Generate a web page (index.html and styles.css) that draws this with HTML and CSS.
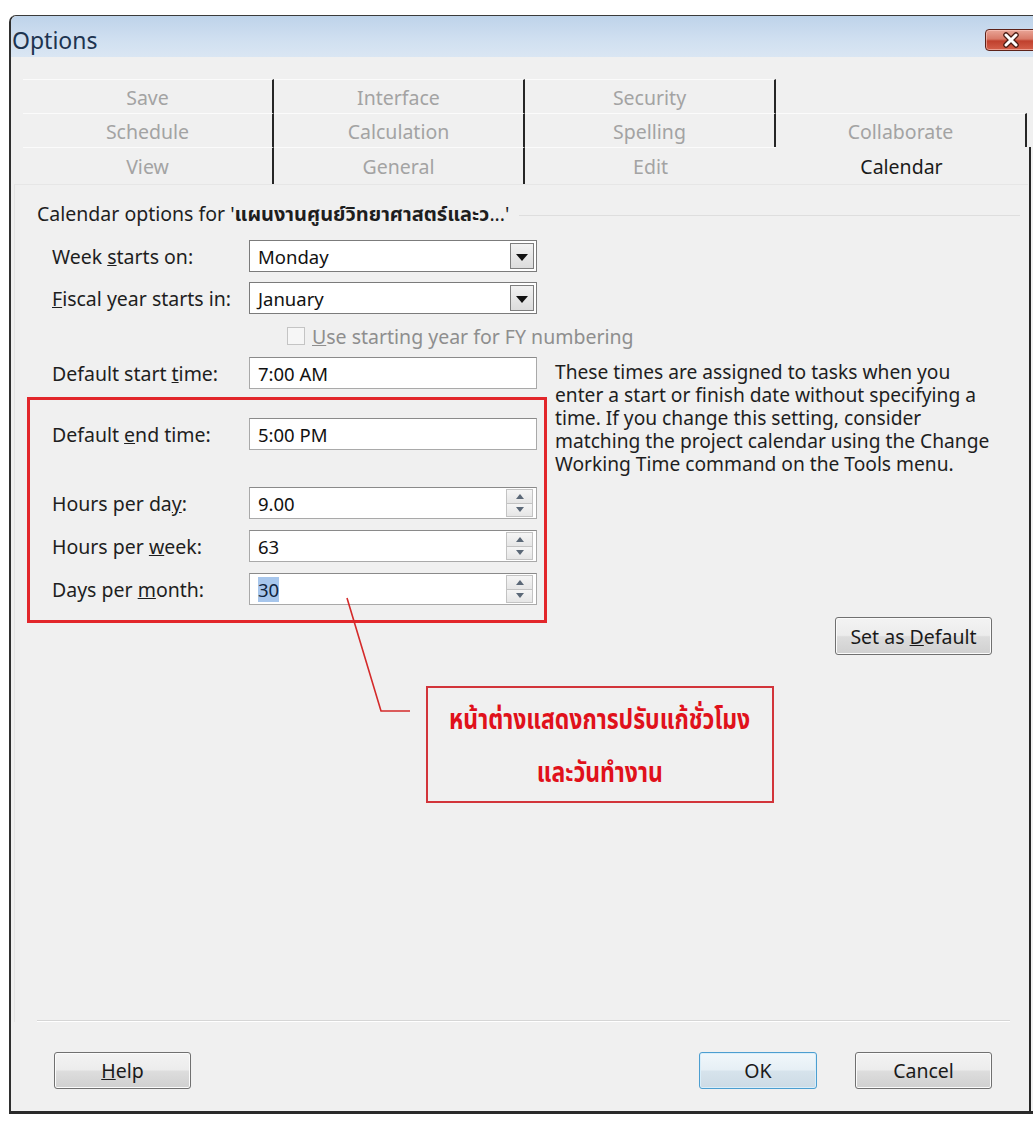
FILE: index.html
```html
<!DOCTYPE html>
<html lang="en">
<head>
<meta charset="utf-8">
<title>Options</title>
<link rel="stylesheet" href="styles.css">
</head>
<body>
<div class="window">
  <div class="titlebar">
    <span class="title">Options</span>
    <div class="close" aria-label="Close">
      <svg width="52" height="22" viewBox="0 0 52 22">
        <path d="M21 6 L31 16 M31 6 L21 16" stroke="#4a1c14" stroke-width="5.5" stroke-linecap="round" fill="none"/>
        <path d="M21 6 L31 16 M31 6 L21 16" stroke="#ffffff" stroke-width="3" stroke-linecap="round" fill="none"/>
      </svg>
    </div>
  </div>

  <div class="tab-row top">
    <div class="tab">Save</div>
    <div class="tab">Interface</div>
    <div class="tab">Security</div>
    <div class="tab blank"></div>
  </div>
  <div class="tab-row">
    <div class="tab">Schedule</div>
    <div class="tab">Calculation</div>
    <div class="tab">Spelling</div>
    <div class="tab">Collaborate</div>
  </div>

  <div class="frame">
    <div class="tab-row front">
      <div class="tab">View</div>
      <div class="tab">General</div>
      <div class="tab plain">Edit</div>
      <div class="tab active">Calendar</div>
    </div>

    <div class="panel">
      <div class="group-head">
        <span>Calendar options for '<span class="thai">แผนงานศูนย์วิทยาศาสตร์และว</span>...'</span>
        <i class="rule"></i>
      </div>

      <div class="field first">
        <label>Week <u>s</u>tarts on:</label>
        <div class="box combo"><span class="val">Monday</span>
          <span class="drop"><svg width="12" height="7" viewBox="0 0 12 7"><path d="M0 0 H12 L6 7 Z" fill="#111"/></svg></span>
        </div>
      </div>
      <div class="field gap10">
        <label><u>F</u>iscal year starts in:</label>
        <div class="box combo"><span class="val">January</span>
          <span class="drop"><svg width="12" height="7" viewBox="0 0 12 7"><path d="M0 0 H12 L6 7 Z" fill="#111"/></svg></span>
        </div>
      </div>
      <div class="check-row">
        <span class="checkbox"></span>
        <span class="check-label"><u>U</u>se starting year for FY numbering</span>
      </div>

      <div class="split">
        <div class="form-col">
          <div class="field">
            <label>Default start <u>t</u>ime:</label>
            <div class="box"><span class="val">7:00 AM</span></div>
          </div>

          <div class="highlight">
            <div class="field">
              <label>Default <u>e</u>nd time:</label>
              <div class="box"><span class="val">5:00 PM</span></div>
            </div>
            <div class="field gap37">
              <label>Hours per da<u>y</u>:</label>
              <div class="box"><span class="val">9.00</span>
                <span class="spin"><span class="up"><svg width="8" height="5" viewBox="0 0 8 5"><path d="M0 5 L4 0 L8 5 Z" fill="#5b6877"/></svg></span><span class="down"><svg width="8" height="5" viewBox="0 0 8 5"><path d="M0 0 L8 0 L4 5 Z" fill="#5b6877"/></svg></span></span>
              </div>
            </div>
            <div class="field gap11">
              <label>Hours per <u>w</u>eek:</label>
              <div class="box"><span class="val">63</span>
                <span class="spin"><span class="up"><svg width="8" height="5" viewBox="0 0 8 5"><path d="M0 5 L4 0 L8 5 Z" fill="#5b6877"/></svg></span><span class="down"><svg width="8" height="5" viewBox="0 0 8 5"><path d="M0 0 L8 0 L4 5 Z" fill="#5b6877"/></svg></span></span>
              </div>
            </div>
            <div class="field gap11">
              <label>Days per <u>m</u>onth:</label>
              <div class="box"><span class="val"><span class="sel">30</span></span>
                <span class="spin"><span class="up"><svg width="8" height="5" viewBox="0 0 8 5"><path d="M0 5 L4 0 L8 5 Z" fill="#5b6877"/></svg></span><span class="down"><svg width="8" height="5" viewBox="0 0 8 5"><path d="M0 0 L8 0 L4 5 Z" fill="#5b6877"/></svg></span></span>
              </div>
            </div>
          </div>
        </div>

        <div class="info-col">
          <p class="note">These times are assigned to tasks when you<br>enter a start or finish date without specifying a<br>time. If you change this setting, consider<br>matching the project calendar using the Change<br>Working Time command on the Tools menu.</p>
          <button class="btn set-default">Set as <u>D</u>efault</button>
        </div>
      </div>

      <svg class="leader" width="70" height="120" viewBox="0 0 70 120">
        <path d="M2 3 L36 116 L65 116" stroke="#d42a2a" stroke-width="1.6" fill="none"/>
      </svg>
      <div class="callout">
        <p><span>หน้าต่างแสดงการปรับแก้ชั่วโมง</span></p>
        <p><span>และวันทำงาน</span></p>
      </div>

      <div class="separator"></div>
    </div>

    <div class="footer">
      <button class="btn help"><u>H</u>elp</button>
      <span class="spacer"></span>
      <button class="btn ok default">OK</button>
      <button class="btn cancel">Cancel</button>
    </div>
  </div>
</div>
</body>
</html>
```

FILE: styles.css
```css
* { box-sizing: border-box; }

html, body {
  margin: 0;
  overflow: hidden;
}

body {
  width: 1033px;
  height: 1122px;
  background: #ffffff;
  font-family: "Noto Sans", "Open Sans", "Noto Sans Thai", Tahoma, sans-serif;
  font-size: 19.5px;
  color: #1e1e1e;
}

/* dialog window */
.window {
  margin: 15px 0 0 9px;
  width: 1024px;
  border-left: 2px solid #2f2f2f;
  border-top: 1px solid #3b3b3b;
  border-bottom: 3px solid #2a2a2a;
  border-top-left-radius: 7px;
  background: #f0f0f0;
}

.titlebar {
  height: 41px;
  display: flex;
  align-items: center;
  justify-content: space-between;
  padding: 6px 0 0 1px;
  border-top-left-radius: 6px;
  background: linear-gradient(#bed3ea, #cfdff0 55%, #dae6f3);
}

.title {
  font-size: 23px;
  color: #1d3450;
}

.close {
  width: 52px;
  height: 22px;
  margin: 0 -4px 0 0;
  border: 1px solid #5d2219;
  border-radius: 4px;
  background: linear-gradient(#e9a597 0%, #d87a68 45%, #c0402d 55%, #d4604a 100%);
  box-shadow: inset 0 0 0 1px rgba(255, 210, 200, 0.55);
}
.close svg { display: block; margin: -1px 0 0 -1px; }

/* tab strip */
.tab-row {
  display: grid;
  grid-template-columns: repeat(4, 251px);
  height: 34px;
  margin-left: 12px;
}
.tab-row.top { margin-top: 22px; }

.tab {
  display: flex;
  align-items: center;
  justify-content: center;
  color: #a3a3a3;
  border-right: 2px solid #262626;
  border-top: 1px solid #fbfbfb;
  padding-top: 1px;
}
.tab.blank { border-right: none; border-top-color: transparent; }
.tab.plain { border-right: none; }
.tab.active { border-right: none; color: #1a1a1a; border-top-color: transparent; }

.frame {
  width: 1020px;
  border-right: 2px solid #262626;
}

.tab-row.front { height: 37px; }

/* property page */
.panel {
  position: relative;
  margin-left: 3px;
  width: 1014px;
  height: 838px;
  display: flex;
  flex-direction: column;
  padding: 18px 0 0 22px;
  border-left: 1px solid #e4e4e4;
  border-top: 1px solid #e6e6e6;
}

.group-head {
  display: flex;
  align-items: center;
  height: 24px;
}
.thai {
  font-family: Tahoma, "Noto Sans Thai", "Loma", "Garuda", sans-serif;
  font-size: 20px;
  font-weight: 700;
}
.group-head .rule {
  flex: 1;
  height: 1px;
  margin: 0 8px 0 10px;
  background: #dedede;
}

.field {
  display: flex;
  align-items: center;
  margin-left: 15px;
  height: 32px;
}
.field label { width: 197px; }
.field.first { margin-top: 13px; }
.gap10 { margin-top: 10px; }
.gap11 { margin-top: 11px; }
.gap37 { margin-top: 37px; }

.box {
  position: relative;
  display: flex;
  align-items: center;
  width: 288px;
  height: 32px;
  background: #ffffff;
  border: 1px solid #a9a9a9;
  border-top-color: #8a8a8a;
}
.box .val {
  flex: 1;
  padding-left: 8px;
  font-size: 18.5px;
  color: #111;
}
.combo { border-color: #7b7b7b; }

.drop {
  display: flex;
  align-items: center;
  justify-content: center;
  width: 24px;
  height: 26px;
  margin-right: 2px;
  padding-top: 3px;
  border: 1px solid #7e7e7e;
  background: linear-gradient(#f2f2f2, #dcdcdc);
}

.spin {
  display: flex;
  flex-direction: column;
  width: 27px;
  height: 28px;
  margin-right: 3px;
}
.spin span {
  flex: 1;
  display: flex;
  align-items: center;
  justify-content: center;
  border: 1px solid #c3c3c3;
  background: linear-gradient(#f5f5f5, #e6e6e6);
}
.spin .down { border-top: none; }

.sel {
  background: #a7c6ec;
  color: #10243e;
}

.check-row {
  display: flex;
  align-items: center;
  height: 24px;
  margin: 10px 0 0 250px;
}
.checkbox {
  width: 18px;
  height: 18px;
  border: 1px solid #c4c4c4;
  background: #f6f6f6;
}
.check-label {
  margin-left: 7px;
  color: #8e8e8e;
}

.split {
  display: flex;
  margin-top: 9px;
}
.form-col { width: 510px; }

.highlight {
  width: 520px;
  margin: 8px 0 0 -10px;
  padding: 18px 7px 15px 22px;
  border: 3px solid #e2262b;
}
.highlight .field { margin-left: 0; }

.info-col {
  display: flex;
  flex-direction: column;
  margin-left: 8px;
  flex: 1;
}
.note {
  margin: 0;
  padding-top: 3px;
  font-size: 19.2px;
  line-height: 23px;
  white-space: nowrap;
  color: #1e1e1e;
}

/* push buttons */
.btn {
  height: 37px;
  border: 1px solid #707070;
  border-radius: 3px;
  background: linear-gradient(#f3f3f3 0%, #ececec 48%, #dddddd 52%, #d0d0d0 100%);
  box-shadow: inset 0 0 0 1px #fbfbfb;
  font: inherit;
  color: #1a1a1a;
  padding: 0;
}
.set-default {
  align-self: flex-end;
  width: 157px;
  height: 38px;
  margin: 142px 36px 0 0;
}

.leader {
  position: absolute;
  left: 330px;
  top: 410px;
}

.callout {
  position: absolute;
  left: 411px;
  top: 501px;
  width: 348px;
  height: 117px;
  border: 2px solid #d2343a;
  padding-top: 13px;
  color: #e0111b;
  font-family: "Noto Sans Thai", Tahoma, "Loma", sans-serif;
  font-weight: 700;
  font-size: 28px;
  white-space: nowrap;
}
.callout p {
  display: flex;
  justify-content: center;
  margin: 0;
  height: 53px;
  line-height: 40px;
}
.callout span {
  flex-shrink: 0;
  transform: scaleX(0.82);
}

.separator {
  margin: auto 18px 0 0;
  height: 2px;
  border-top: 1px solid #d6d6d6;
  border-bottom: 1px solid #ffffff;
}

.footer {
  display: flex;
  align-items: center;
  padding: 30px 37px 22px 43px;
}
.spacer { flex: 1; }
.help { width: 137px; }
.ok { width: 118px; }
.cancel { width: 137px; margin-left: 38px; }
.btn.default {
  border-color: #4c9ed0;
  background: linear-gradient(#f1f7fb 0%, #e6eff5 48%, #d6e3ec 52%, #cddbe5 100%);
  box-shadow: inset 0 0 0 1px #d9eefa;
}
```
